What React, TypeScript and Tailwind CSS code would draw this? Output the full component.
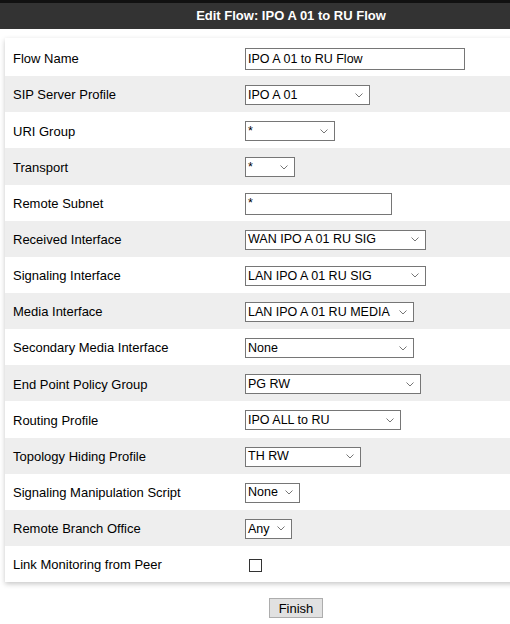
import React from "react";

type Field = {
  label: string;
  kind: "text" | "select" | "check";
  value?: string;
  width?: number;
};

const fields: Field[] = [
  { label: "Flow Name", kind: "text", value: "IPO A 01 to RU Flow", width: 220 },
  { label: "SIP Server Profile", kind: "select", value: "IPO A 01", width: 125 },
  { label: "URI Group", kind: "select", value: "*", width: 90 },
  { label: "Transport", kind: "select", value: "*", width: 50 },
  { label: "Remote Subnet", kind: "text", value: "*", width: 147 },
  { label: "Received Interface", kind: "select", value: "WAN IPO A 01 RU SIG", width: 181 },
  { label: "Signaling Interface", kind: "select", value: "LAN IPO A 01 RU SIG", width: 181 },
  { label: "Media Interface", kind: "select", value: "LAN IPO A 01 RU MEDIA", width: 169 },
  { label: "Secondary Media Interface", kind: "select", value: "None", width: 169 },
  { label: "End Point Policy Group", kind: "select", value: "PG RW", width: 176 },
  { label: "Routing Profile", kind: "select", value: "IPO ALL to RU", width: 156 },
  { label: "Topology Hiding Profile", kind: "select", value: "TH RW", width: 116 },
  { label: "Signaling Manipulation Script", kind: "select", value: "None", width: 55 },
  { label: "Remote Branch Office", kind: "select", value: "Any", width: 47 },
  { label: "Link Monitoring from Peer", kind: "check" },
];

function Chevron() {
  return (
    <svg width="8" height="5" viewBox="0 0 8 5" className="shrink-0">
      <polyline points="0.5,0.5 4,4 7.5,0.5" fill="none" stroke="#666" strokeWidth="0.9" />
    </svg>
  );
}

function Control({ f }: { f: Field }) {
  if (f.kind === "check") {
    return <div className="ml-[4px] w-[13px] h-[13px] border border-[#333] bg-white" />;
  }
  if (f.kind === "text") {
    return (
      <div
        className="h-[22px] border border-[#767676] bg-white flex items-center pl-[2px] text-[12.5px] text-black"
        style={{ width: f.width }}
      >
        {f.value}
      </div>
    );
  }
  return (
    <div
      className="h-[20px] border border-[#767676] bg-white flex items-center justify-between pl-[2px] pr-[6px] text-[12.5px] text-black"
      style={{ width: f.width }}
    >
      <span>{f.value}</span>
      <Chevron />
    </div>
  );
}

export default function App() {
  return (
    <div className="w-[590px] bg-white font-['Liberation_Sans',Arial,sans-serif] pb-[8px]">
      <div className="h-[3px] overflow-hidden bg-[#111]">
        <div className="-mt-[11px] -ml-[10px] text-[13px] leading-[14px] text-[#999]">Users</div>
      </div>
      <div className="w-[582px] h-[26px] bg-[#333] flex items-center justify-center text-white font-bold text-[13px]">
        Edit Flow: IPO A 01 to RU Flow
      </div>
      <div className="ml-[5px] mt-[9px] w-[580px] bg-white pt-[2px] shadow-[0_2px_5px_rgba(0,0,0,0.22)]">
        {fields.map((f, i) => (
          <div
            key={f.label}
            className={`h-[36.15px] pt-[2px] flex items-center text-[13px] text-black ${i % 2 === 1 ? "bg-[#eeeeee]" : "bg-white"}`}
          >
            <div className="w-[240px] pl-[8px]">{f.label}</div>
            <Control f={f} />
          </div>
        ))}
      </div>
      <div className="flex justify-center mt-[16px] pl-[2px]">
        <button className="w-[54px] h-[20px] bg-[#e1e1e1] border border-[#adadad] text-[13px] text-black leading-none">
          Finish
        </button>
      </div>
    </div>
  );
}
